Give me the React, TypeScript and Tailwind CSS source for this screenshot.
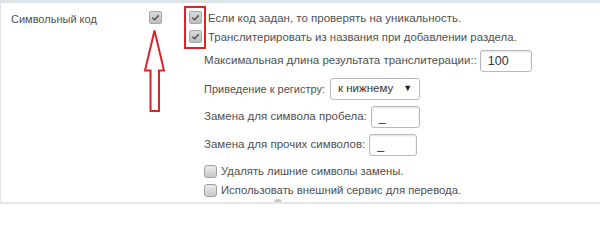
import React from "react";

function Check({ checked }: { checked?: boolean }) {
  return checked ? (
    <span className="flex h-[13px] w-[13px] shrink-0 items-center justify-center rounded-[2px] border border-[#a9a9a9] bg-gradient-to-b from-[#d9d9d9] to-[#bdbdbd]">
      <svg viewBox="0 0 10 10" className="h-[9px] w-[9px]">
        <path d="M1.5 5.2 L4 7.5 L8.6 2.4" fill="none" stroke="#505050" strokeWidth="1.6" />
      </svg>
    </span>
  ) : (
    <span className="h-[13px] w-[13px] shrink-0 rounded-[3px] border border-[#a0a0a0] bg-gradient-to-b from-[#ececec] to-[#c9c9c9]" />
  );
}

function Field({ value, w }: { value: string; w: string }) {
  return (
    <span
      className={`flex h-[22px] ${w} items-center rounded-[3px] border border-[#b9b9b9] bg-white px-[7px] text-[12.5px] text-[#333] shadow-[inset_0_1px_2px_rgba(0,0,0,0.12)]`}
    >
      {value}
    </span>
  );
}

export default function App() {
  return (
    <div className="relative h-[204px] w-[600px] overflow-hidden border-l border-t-[3px] border-[#dfe4e8] bg-white font-['Liberation_Sans',Arial,sans-serif] text-[11.5px] text-[#505050]">
      <div className="flex pt-[8px]">
        <div className="w-[148px] pl-[10px] text-[11px]">Символьный код</div>
        <div className="w-[40px]">
          <Check checked />
        </div>
        <div className="flex flex-col">
          <label className="flex h-[19px] items-start gap-[6px]">
            <Check checked />
            <span className="-mt-[1px] text-[11.5px]">Если код задан, то проверять на уникальность.</span>
          </label>
          <label className="flex h-[20px] items-start gap-[6px]">
            <Check checked />
            <span className="-mt-[1px] text-[11.4px]">Транслитерировать из названия при добавлении раздела.</span>
          </label>
          <div className="flex flex-col gap-[6px] pl-[15px]">
            <div className="flex items-center gap-[3px]">
              <span>Максимальная длина результата транслитерации::</span>
              <Field value="100" w="w-[52px]" />
            </div>
            <div className="flex items-center gap-[5px]">
              <span className="text-[11px]">Приведение к регистру:</span>
              <span className="flex h-[22px] w-[90px] items-center justify-between rounded-[3px] border border-[#b9b9b9] bg-white px-[7px] text-[11.5px] text-[#333]">
                к нижнему
                <span className="text-[9px] text-[#222]">▼</span>
              </span>
            </div>
            <div className="flex items-center gap-[4px]">
              <span>Замена для символа пробела:</span>
              <Field value="_" w="w-[49px]" />
            </div>
            <div className="flex items-center gap-[4px]">
              <span>Замена для прочих символов:</span>
              <Field value="_" w="w-[48px]" />
            </div>
            <div className="flex flex-col">
              <label className="flex h-[19px] items-center gap-[4px]">
                <Check />
                <span className="text-[11.3px]">Удалять лишние символы замены.</span>
              </label>
              <label className="flex h-[19px] items-center gap-[4px]">
                <Check />
                <span className="text-[11.3px]">Использовать внешний сервис для перевода.</span>
              </label>
            </div>
          </div>
        </div>
      </div>

      <div className="absolute left-[183px] top-[3px] h-[43px] w-[22px] border-2 border-[#e0222b]" />
      <svg className="absolute left-[141px] top-[26px]" width="25" height="84" viewBox="0 0 25 84">
        <path
          d="M12.5 1.5 L22 41.5 L17 41.5 L17 82 L8.5 82 L8.5 41.5 L3 41.5 Z"
          fill="none"
          stroke="#e0222b"
          strokeWidth="2"
        />
      </svg>
      <span className="absolute left-[273px] top-[196px] h-[8px] w-[8px] rounded-full bg-[#c8c8c8]" />
      <div className="absolute bottom-0 left-0 h-[2px] w-full bg-[#e3e6e9]" />
    </div>
  );
}
